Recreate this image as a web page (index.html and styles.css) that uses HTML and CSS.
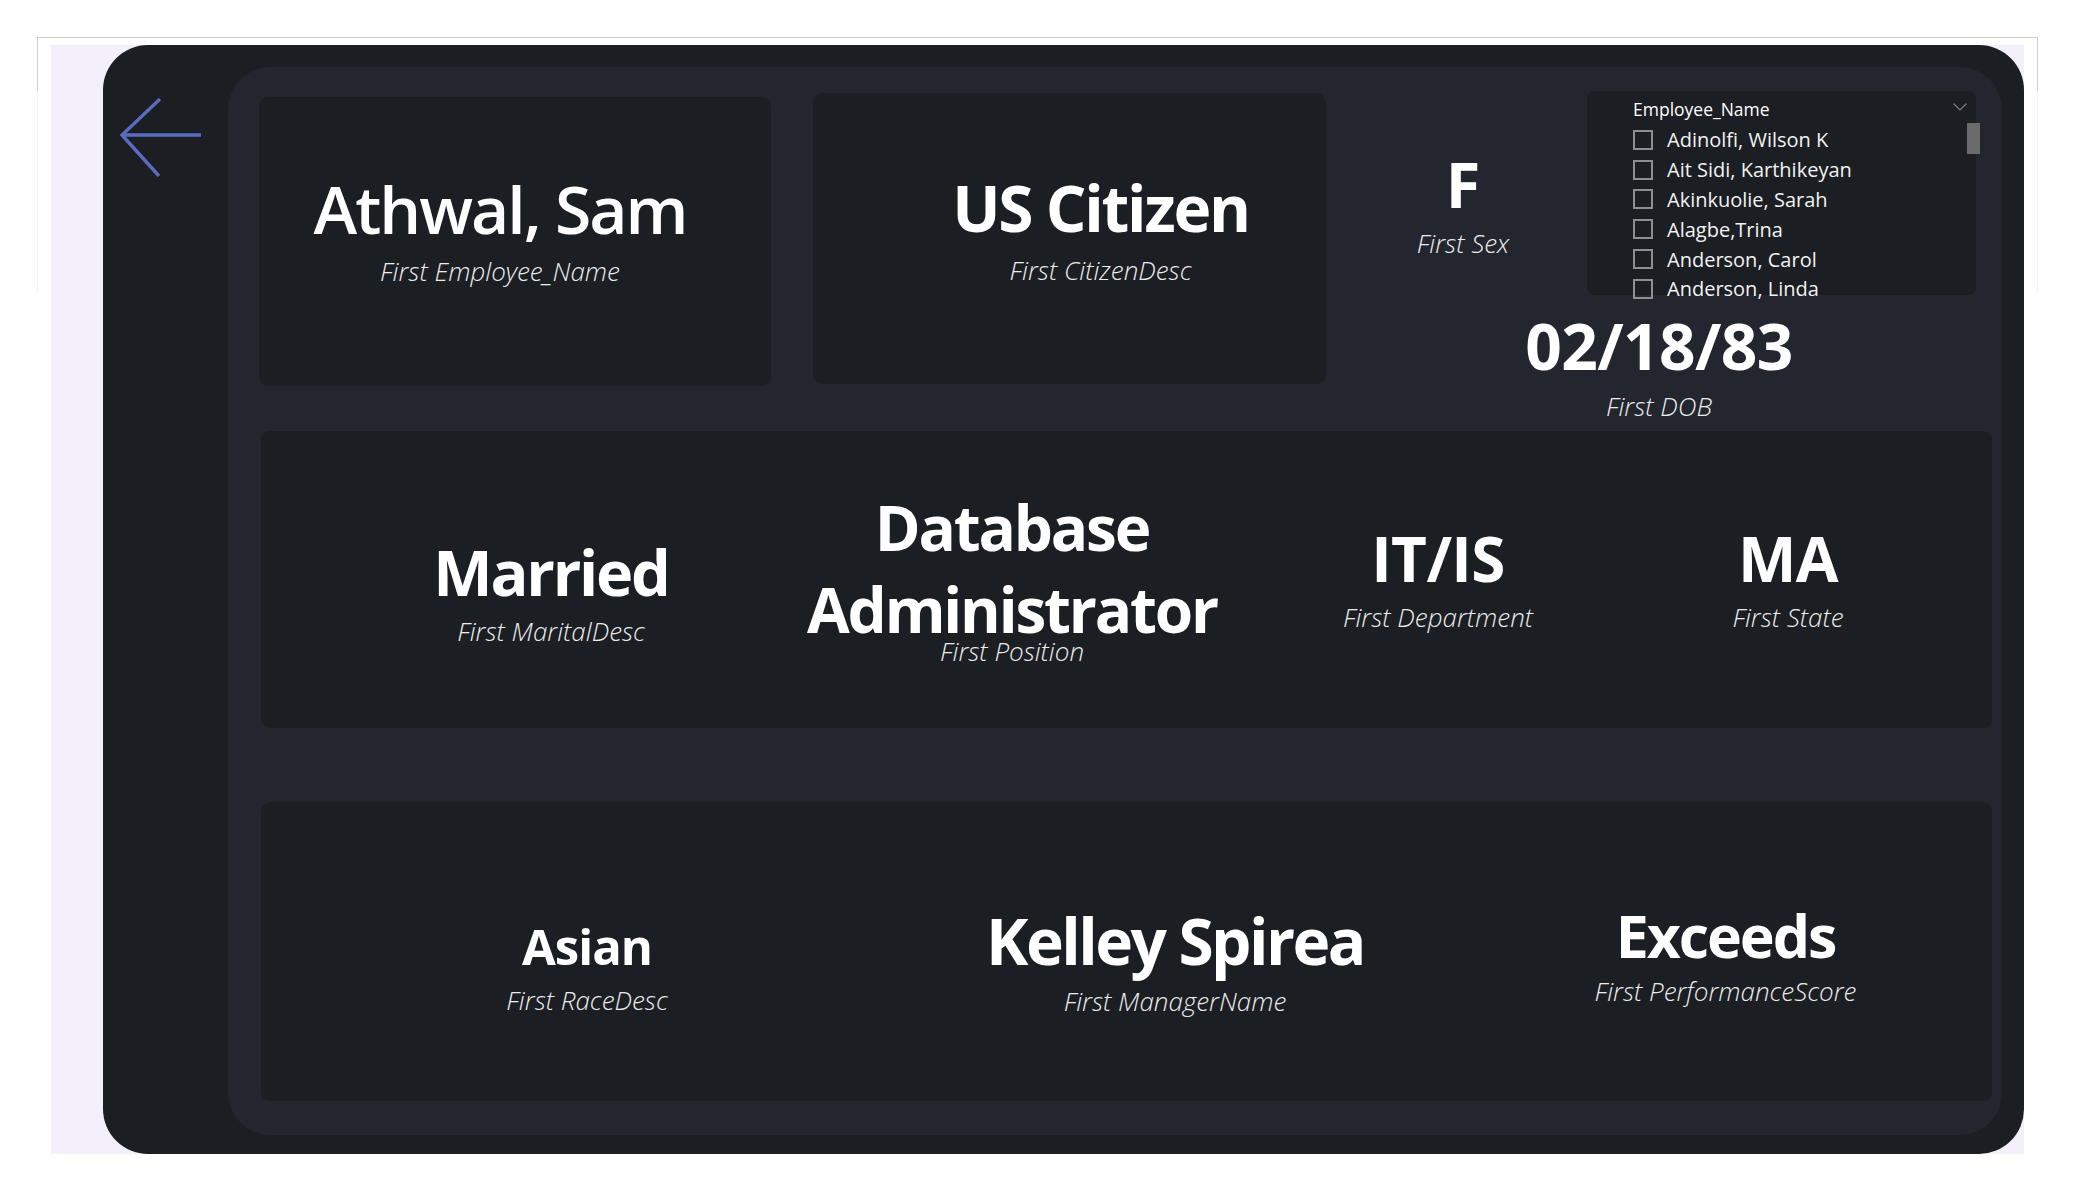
FILE: index.html
```html
<!DOCTYPE html>
<html lang="en">
<head>
<meta charset="utf-8">
<title>Employee Details</title>
<link rel="stylesheet" href="styles.css">
</head>
<body>
<div class="sheet">
  <div class="canvas">
    <div class="frame">
      <div class="rail">
        <svg class="back" width="90" height="90" viewBox="0 0 90 90" aria-label="Back">
          <path d="M42 4 L4 40 L41 81 M4 40 L83 40" fill="none" stroke="#5b6bc0" stroke-width="3.4"/>
        </svg>
      </div>
      <div class="panel">
        <div class="row-top">
          <div class="card card-name">
            <div class="kpi">
              <div class="value semi v-name">Athwal, Sam</div>
              <div class="label gap17">First Employee_Name</div>
            </div>
          </div>
          <div class="card card-citizen">
            <div class="kpi">
              <div class="value v-citizen">US Citizen</div>
              <div class="label gap17">First CitizenDesc</div>
            </div>
          </div>
          <div class="side">
            <div class="side-top">
              <div class="kpi kpi-sex">
                <div class="value v-sex">F</div>
                <div class="label">First Sex</div>
              </div>
              <div class="slicer">
                <div class="slicer-head">
                  <span>Employee_Name</span>
                  <svg width="14" height="8" viewBox="0 0 14 8"><path d="M0.5 0.5 L7 7 L13.5 0.5" fill="none" stroke="#7d7d7d" stroke-width="1.2"/></svg>
                </div>
                <ul class="list">
                  <li><span class="box"></span>Adinolfi, Wilson K</li>
                  <li><span class="box"></span>Ait Sidi, Karthikeyan</li>
                  <li><span class="box"></span>Akinkuolie, Sarah</li>
                  <li><span class="box"></span>Alagbe,Trina</li>
                  <li><span class="box"></span>Anderson, Carol</li>
                  <li><span class="box"></span>Anderson, Linda</li>
                </ul>
                <div class="scroll-thumb"></div>
              </div>
            </div>
            <div class="kpi kpi-dob">
              <div class="value v-dob">02/18/83</div>
              <div class="label">First DOB</div>
            </div>
          </div>
        </div>

        <div class="card row-mid">
          <div class="kpi k-married">
            <div class="value v-married">Married</div>
            <div class="label">First MaritalDesc</div>
          </div>
          <div class="kpi k-position">
            <div class="value v-position">Database<br>Administrator</div>
            <div class="label pull">First Position</div>
          </div>
          <div class="kpi k-dept">
            <div class="value v-short">IT/IS</div>
            <div class="label">First Department</div>
          </div>
          <div class="kpi k-state">
            <div class="value v-short">MA</div>
            <div class="label">First State</div>
          </div>
        </div>

        <div class="card row-bottom">
          <div class="kpi k-race">
            <div class="value v-race">Asian</div>
            <div class="label gap16">First RaceDesc</div>
          </div>
          <div class="kpi k-manager">
            <div class="value v-manager">Kelley Spirea</div>
            <div class="label">First ManagerName</div>
          </div>
          <div class="kpi k-score">
            <div class="value v-score">Exceeds</div>
            <div class="label gap13">First PerformanceScore</div>
          </div>
        </div>
      </div>
    </div>
  </div>
</div>
</body>
</html>
```

FILE: styles.css
```css
* { box-sizing: border-box; }

html, body {
  margin: 0;
  padding: 0;
  background: #ffffff;
  width: 2075px;
  height: 1200px;
  overflow: hidden;
  font-family: "Open Sans", "Noto Sans", "Liberation Sans", sans-serif;
}

.sheet {
  margin: 37px 0 0 37px;
  width: 2001px;
  border-top: 1px solid #cfcfcf;
  padding: 7px 0 0 14px;
  background:
    linear-gradient(#cfcfcf, #cfcfcf) left top / 1px 53px no-repeat,
    linear-gradient(#cfcfcf, #cfcfcf) right top / 1px 53px no-repeat,
    linear-gradient(#f3f3f3, #f3f3f3) left top / 1px 253px no-repeat,
    linear-gradient(#f3f3f3, #f3f3f3) right top / 1px 253px no-repeat;
}

.canvas {
  width: 1973px;
  height: 1109px;
  background: #f4f0fb;
}

.frame {
  margin-left: 52px;
  width: 1921px;
  height: 1109px;
  background: #1b1e22;
  border-radius: 45px;
  display: flex;
}

.rail {
  width: 125px;
  flex: none;
}

.back {
  display: block;
  margin: 50px 0 0 15px;
}

.panel {
  margin-top: 22px;
  width: 1774px;
  height: 1068px;
  background: #23262e;
  border-radius: 42px;
  padding: 23px 10px 0 31px;
  display: flex;
  flex-direction: column;
}

.card {
  background: #1b1e22;
  border-radius: 9px;
}

/* generic KPI card text */
.kpi {
  display: flex;
  flex-direction: column;
  align-items: center;
  color: #ffffff;
  white-space: nowrap;
}

.value {
  font-weight: 700;
  line-height: 1;
  color: #ffffff;
}
.value.semi { font-weight: 600; }

.v-name     { font-size: 66px; letter-spacing: -0.03em; }
.v-citizen  { font-size: 64px; letter-spacing: -0.035em; }
.v-sex      { font-size: 63px; }
.v-dob      { font-size: 64px; letter-spacing: -0.01em; }
.v-married  { font-size: 63px; letter-spacing: -0.035em; }
.v-position { font-size: 62px; letter-spacing: -0.035em; line-height: 82px; text-align: center; }
.v-short    { font-size: 62px; letter-spacing: -0.01em; }
.v-race     { font-size: 49px; letter-spacing: -0.02em; }
.v-manager  { font-size: 64px; letter-spacing: -0.04em; }
.v-score    { font-size: 59px; letter-spacing: -0.035em; }

.label {
  margin-top: 15px;
  font-size: 26px;
  line-height: 1;
  font-style: italic;
  font-weight: 300;
  color: #ececec;
}
.label.gap17 { margin-top: 17px; }
.label.gap16 { margin-top: 16px; }
.label.gap13 { margin-top: 13px; }
.label.pull { margin-top: -12px; }

/* top row */
.row-top {
  display: flex;
  align-items: flex-start;
  height: 296px;
  flex: none;
}

.card-name {
  margin-top: 7px;
  width: 512px;
  height: 289px;
  padding: 78px 30px 0 0;
}

.card-citizen {
  margin: 3px 0 0 42px;
  width: 513px;
  height: 291px;
  padding: 83px 0 0 62px;
}

.side {
  width: 666px;
  display: flex;
  flex-direction: column;
  align-items: center;
}

.side-top {
  width: 100%;
  display: flex;
  align-items: flex-start;
}

.kpi-sex {
  flex: 1;
  padding: 62px 0 0 13px;
}

.kpi-dob {
  margin-top: 19px;
}

/* slicer */
.slicer {
  position: relative;
  margin: 1px 16px 0 0;
  width: 389px;
  height: 204px;
  background: #1b1e22;
  border-radius: 8px;
  padding: 10px 9px 0 46px;
  color: #ffffff;
}

.slicer-head {
  display: flex;
  justify-content: space-between;
  align-items: flex-start;
  font-size: 17.5px;
  line-height: 1;
  height: 24px;
}
.slicer-head svg {
  margin-top: 2px;
}

.list {
  list-style: none;
  margin: 0;
  padding: 0;
}

.list li {
  display: flex;
  align-items: center;
  height: 29.8px;
  font-size: 20px;
  color: #f2f2f2;
  white-space: nowrap;
}

.box {
  width: 20px;
  height: 20px;
  border: 2px solid #8f8f8f;
  margin-right: 14px;
  flex: none;
}

.scroll-thumb {
  position: absolute;
  right: -4px;
  top: 32px;
  width: 13px;
  height: 31px;
  background: #6b6b6b;
}

/* middle row */
.row-mid {
  margin: 45px 0 0 2px;
  height: 297px;
  flex: none;
  display: grid;
  grid-template-columns: 580px 342px 510px 190px;
  align-items: start;
}

.k-married { padding-top: 109px; }
.k-position { padding-top: 55px; }
.k-dept { padding-top: 96px; }
.k-state { padding-top: 96px; }

/* bottom row */
.row-bottom {
  margin: 74px 0 0 2px;
  height: 299px;
  flex: none;
  display: grid;
  grid-template-columns: 652px 524px 555px;
  align-items: start;
}

.k-race { padding-top: 120px; }
.k-manager { padding-top: 107px; }
.k-score { padding: 104px 0 0 22px; }
```
